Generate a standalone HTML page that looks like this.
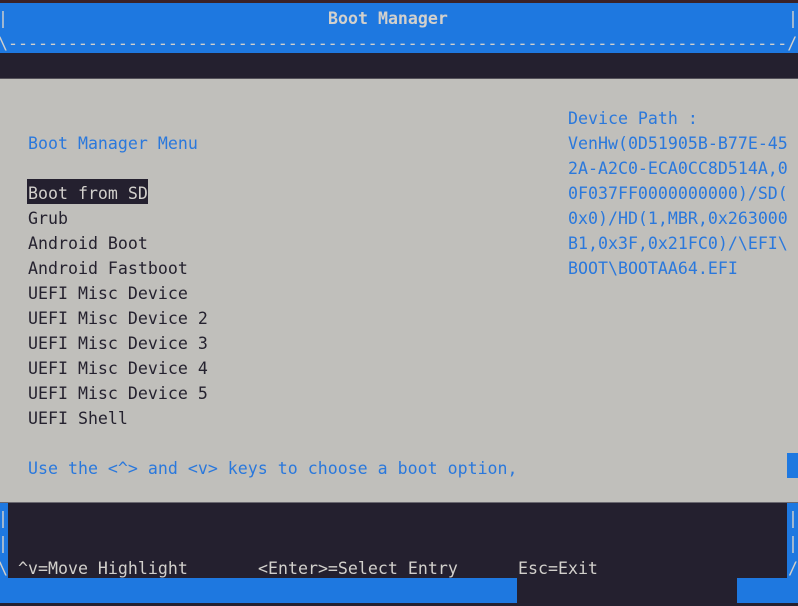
<!DOCTYPE html>
<html><head><style>
html,body{margin:0;padding:0}
body{width:798px;height:606px;overflow:hidden;position:relative;background:#24202f;font-family:"DejaVu Sans Mono","Liberation Mono",monospace;font-size:16.6px}
.r{position:absolute;height:25px;line-height:25px;white-space:pre;letter-spacing:0;margin-top:2px}
.b{position:absolute}
.lt{color:#d2d0cc}
.dk{color:#25222f}
.bl{color:#2a78dc}
</style></head><body>
<div class="b" style="left:0;top:0;width:798px;height:3px;background:#3a2228"></div>
<div class="b" style="left:0;top:3px;width:798px;height:50px;background:#1e78e0"></div>
<div class="b" style="left:0;top:53px;width:798px;height:25px;background:#24202f"></div>
<div class="b" style="left:0;top:78px;width:798px;height:1px;background:#55525a"></div>
<div class="b" style="left:0;top:79px;width:798px;height:424px;background:#c0bfbb"></div>
<div class="b" style="left:0;top:502px;width:798px;height:1px;background:#6a6870"></div>
<div class="b" style="left:787px;top:453px;width:11px;height:25px;background:#1e78e0"></div>
<div class="b" style="left:0;top:503px;width:8px;height:75px;background:#1e78e0"></div>
<div class="b" style="left:787px;top:503px;width:11px;height:75px;background:#1e78e0"></div>
<div class="b" style="left:0;top:578px;width:517px;height:25px;background:#1e78e0"></div>
<div class="b" style="left:737px;top:578px;width:61px;height:25px;background:#1e78e0"></div>

<div class="r lt" style="left:-2px;top:4px">|</div>
<div class="r lt" style="left:328px;top:4px;font-weight:bold">Boot Manager</div>
<div class="r lt" style="left:788px;top:4px">|</div>
<div class="r lt" style="left:-2px;top:29px">\------------------------------------------------------------------------------/</div>

<div class="r bl" style="left:568px;top:104px">Device Path :</div>
<div class="r bl" style="left:28px;top:129px">Boot Manager Menu</div>
<div class="r bl" style="left:568px;top:129px">VenHw(0D51905B-B77E-45</div>
<div class="r bl" style="left:568px;top:154px">2A-A2C0-ECA0CC8D514A,0</div>
<div class="b" style="left:27px;top:179px;width:121px;height:25px;background:#24202f"></div>
<div class="r lt" style="left:28px;top:179px">Boot from SD</div>
<div class="r bl" style="left:568px;top:179px">0F037FF0000000000)/SD(</div>
<div class="r dk" style="left:28px;top:204px">Grub</div>
<div class="r bl" style="left:568px;top:204px">0x0)/HD(1,MBR,0x263000</div>
<div class="r dk" style="left:28px;top:229px">Android Boot</div>
<div class="r bl" style="left:568px;top:229px">B1,0x3F,0x21FC0)/\EFI\</div>
<div class="r dk" style="left:28px;top:254px">Android Fastboot</div>
<div class="r bl" style="left:568px;top:254px">BOOT\BOOTAA64.EFI</div>
<div class="r dk" style="left:28px;top:279px">UEFI Misc Device</div>
<div class="r dk" style="left:28px;top:304px">UEFI Misc Device 2</div>
<div class="r dk" style="left:28px;top:329px">UEFI Misc Device 3</div>
<div class="r dk" style="left:28px;top:354px">UEFI Misc Device 4</div>
<div class="r dk" style="left:28px;top:379px">UEFI Misc Device 5</div>
<div class="r dk" style="left:28px;top:404px">UEFI Shell</div>
<div class="r bl" style="left:28px;top:454px">Use the &lt;^&gt; and &lt;v&gt; keys to choose a boot option,</div>

<div class="r lt" style="left:-2px;top:504px">|</div>
<div class="r lt" style="left:788px;top:504px">|</div>
<div class="r lt" style="left:-2px;top:529px">|</div>
<div class="r lt" style="left:788px;top:529px">|</div>
<div class="r lt" style="left:-2px;top:554px">\</div>
<div class="r lt" style="left:18px;top:554px">^v=Move Highlight</div>
<div class="r lt" style="left:258px;top:554px">&lt;Enter&gt;=Select Entry</div>
<div class="r lt" style="left:518px;top:554px">Esc=Exit</div>
<div class="r lt" style="left:788px;top:554px">/</div>
</body></html>
